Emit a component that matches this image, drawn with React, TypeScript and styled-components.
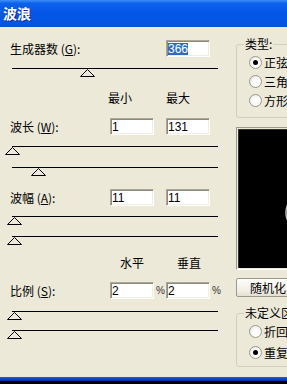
import React from 'react';
import styled, { createGlobalStyle } from 'styled-components';

const GlobalStyle = createGlobalStyle`
    html, body {
        margin: 0;
        padding: 0;
        background: #000;
        overflow: hidden;
    }
    body {
        font-family: "Noto Sans CJK SC", "Noto Sans", sans-serif;
        color: #000;
    }
`;

const Window = styled.div`
    width: 287px;
    display: flex;
    flex-direction: column;
    overflow: hidden;
`;

const TitleBar = styled.div`
    height: 27px;
    display: flex;
    align-items: center;
    padding-left: 3px;
    padding-bottom: 1px;
    box-sizing: border-box;
    color: #fff;
    font-size: 14px;
    font-weight: bold;
    text-shadow: 1px 1px #0b2a9a;
    background: linear-gradient(
        to bottom,
        #3d8ff8 0%,
        #0d62ec 12%,
        #0457e6 45%,
        #0356e4 80%,
        #0a4fd6 100%
    );
`;

const Body = styled.div`
    height: 350px;
    display: flex;
    background: #ece9d8;
    overflow: hidden;
`;

const BottomEdge = styled.div`
    height: 4px;
    background: linear-gradient(to bottom, #1b5ee6, #0a3fcc 60%, #05289a);
`;

const LeftColumn = styled.div`
    width: 236px;
    flex-shrink: 0;
    box-sizing: border-box;
    padding: 13px 0 0 10px;
`;

const RightColumn = styled.div`
    width: 120px;
    flex-shrink: 0;
    padding-top: 10px;
    display: flex;
    flex-direction: column;
`;

const grid = `
    display: grid;
    grid-template-columns: 100px 44px 12px 44px 14px;
`;

const FormRow = styled.div<{ $top: number }>`
    ${grid}
    height: 17px;
    align-items: center;
    margin-top: ${(p) => p.$top}px;
`;

const HeaderRow = styled.div<{ $top: number }>`
    ${grid}
    height: 14px;
    line-height: 14px;
    font-size: 12px;
    margin-top: ${(p) => p.$top}px;
`;

const HeaderCell = styled.div<{ $col: number; $center?: boolean; $shift?: number }>`
    grid-column: ${(p) => p.$col};
    text-align: ${(p) => (p.$center ? 'center' : 'left')};
    margin-left: ${(p) => p.$shift || 0}px;
    white-space: nowrap;
`;

const Label = styled.div<{ $span?: number }>`
    grid-column: 1 / span ${(p) => p.$span || 1};
    font-size: 12px;
    line-height: 14px;
    white-space: nowrap;
`;

const Field = styled.div<{ $col: number }>`
    grid-column: ${(p) => p.$col};
    height: 17px;
    box-sizing: border-box;
    display: flex;
    align-items: center;
    padding-left: 1px;
    background: #fff;
    border: 1px solid;
    border-color: #aca899 #fff #fff #aca899;
    box-shadow: inset 1px 1px #8d8a7c, inset -1px -1px #f1efe2;
    font-family: "Liberation Sans", Arial, sans-serif;
    font-size: 12px;
`;

const Selected = styled.span`
    display: inline-block;
    height: 12px;
    line-height: 12px;
    background: #316ac5;
    color: #fff;
`;

const Percent = styled.div<{ $col: number }>`
    grid-column: ${(p) => p.$col};
    font-family: "Liberation Sans", Arial, sans-serif;
    font-size: 10px;
    padding-left: 2px;
    color: #333;
`;

const Track = styled.div<{ $top: number }>`
    position: relative;
    margin: ${(p) => p.$top}px 0 0 2px;
    width: 206px;
    height: 9px;
    border-top: 1px solid #000;
`;

const Thumb = styled.svg`
    position: absolute;
    top: 0;
    width: 15px;
    height: 8px;
`;

const GroupBox = styled.fieldset<{ $top: number; $bottom: number; $pt: number }>`
    margin: ${(p) => p.$top}px 0 0 0;
    padding: ${(p) => p.$pt}px 0 ${(p) => p.$bottom}px 8px;
    border: 1px solid #d0d0bf;
    border-radius: 3px;
    min-width: 0;
`;

const Legend = styled.legend`
    font-size: 12px;
    line-height: 14px;
    padding: 0 1px;
    margin-left: -1px;
    white-space: nowrap;
`;

const RadioRow = styled.div<{ $h: number }>`
    height: ${(p) => p.$h}px;
    display: flex;
    align-items: center;
    gap: 2px;
    padding-left: 4px;
    font-size: 12px;
    white-space: nowrap;
`;

const RadioDot = styled.span<{ $on?: boolean }>`
    width: 13px;
    height: 13px;
    box-sizing: border-box;
    border-radius: 50%;
    border: 1px solid #9a988c;
    background: radial-gradient(circle at 60% 60%, #ffffff 35%, #e4e2d8 100%);
    display: flex;
    align-items: center;
    justify-content: center;
    flex-shrink: 0;
    &::after {
        content: '';
        width: 5px;
        height: 5px;
        border-radius: 50%;
        background: #000;
        display: ${(p) => (p.$on ? 'block' : 'none')};
    }
`;

const Preview = styled.div`
    margin-top: 9px;
    height: 143px;
    box-sizing: border-box;
    border: 1px solid;
    border-color: #9d9a8b #fff #fff #9d9a8b;
    padding: 1px;
    display: flex;
`;

const Canvas = styled.div`
    flex: 1;
    background: #000;
    border-top: 1px solid #333;
    border-left: 1px solid #333;
`;

const Button = styled.div`
    margin-top: 8px;
    width: 64px;
    height: 19px;
    box-sizing: border-box;
    border: 1px solid #9c998b;
    border-radius: 2px;
    background: linear-gradient(to bottom, #fdfdfb, #f0eee5 70%, #e2dfd2);
    font-size: 12px;
    line-height: 17px;
    text-align: center;
    white-space: nowrap;
`;

const Slider = ({ top, pct }: { top: number; pct: number }) => (
    <Track $top={top}>
        <Thumb viewBox="0 0 15 8" style={{ left: `calc(${pct}% - 7.5px)` }}>
            <polygon points="7.5,0.5 0.5,7.5 14.5,7.5" fill="#ece9d8" stroke="#000" strokeWidth="1" />
        </Thumb>
    </Track>
);

const pct = (v: number, min: number, max: number) => ((v - min) / (max - min)) * 100;

export default function App() {
    return (
        <>
            <GlobalStyle />
            <Window>
                <TitleBar>波浪</TitleBar>
                <Body>
                    <LeftColumn>
                        <FormRow $top={0}>
                            <Label $span={3}>
                                生成器数 (<u>G</u>):
                            </Label>
                            <Field $col={4}>
                                <Selected>366</Selected>
                            </Field>
                        </FormRow>
                        <Slider top={11} pct={pct(366, 1, 999)} />

                        <HeaderRow $top={13}>
                            <HeaderCell $col={2} $shift={-2}>最小</HeaderCell>
                            <HeaderCell $col={4}>最大</HeaderCell>
                        </HeaderRow>
                        <FormRow $top={13}>
                            <Label>
                                波长 (<u>W</u>):
                            </Label>
                            <Field $col={2}>1</Field>
                            <Field $col={4}>131</Field>
                        </FormRow>
                        <Slider top={11} pct={pct(1, 1, 999)} />
                        <Slider top={11} pct={pct(131, 1, 999)} />

                        <FormRow $top={12}>
                            <Label>
                                波幅 (<u>A</u>):
                            </Label>
                            <Field $col={2}>11</Field>
                            <Field $col={4}>11</Field>
                        </FormRow>
                        <Slider top={10} pct={pct(11, 1, 999)} />
                        <Slider top={10} pct={pct(11, 1, 999)} />

                        <HeaderRow $top={10}>
                            <HeaderCell $col={2} $center>水平</HeaderCell>
                            <HeaderCell $col={4} $center $shift={2}>垂直</HeaderCell>
                        </HeaderRow>
                        <FormRow $top={12}>
                            <Label>
                                比例 (<u>S</u>):
                            </Label>
                            <Field $col={2}>2</Field>
                            <Percent $col={3}>%</Percent>
                            <Field $col={4}>2</Field>
                            <Percent $col={5}>%</Percent>
                        </FormRow>
                        <Slider top={12} pct={pct(2, 1, 100)} />
                        <Slider top={9} pct={pct(2, 1, 100)} />
                    </LeftColumn>

                    <RightColumn>
                        <GroupBox $top={0} $pt={2} $bottom={7}>
                            <Legend>类型:</Legend>
                            <RadioRow $h={19}>
                                <RadioDot $on />
                                正弦
                            </RadioRow>
                            <RadioRow $h={19}>
                                <RadioDot />
                                三角形
                            </RadioRow>
                            <RadioRow $h={19}>
                                <RadioDot />
                                方形
                            </RadioRow>
                        </GroupBox>

                        <Preview>
                            <Canvas>
                                <svg width="110" height="139" viewBox="0 0 110 139">
                                    <path
                                        d="M 54 66 Q 40 82.5 54 99"
                                        fill="none"
                                        stroke="#b8b8b8"
                                        strokeWidth="1.6"
                                    />
                                </svg>
                            </Canvas>
                        </Preview>

                        <Button>随机化</Button>

                        <GroupBox $top={9} $pt={1} $bottom={3}>
                            <Legend>未定义区域:</Legend>
                            <RadioRow $h={21}>
                                <RadioDot />
                                折回
                            </RadioRow>
                            <RadioRow $h={21}>
                                <RadioDot $on />
                                重复像素
                            </RadioRow>
                        </GroupBox>
                    </RightColumn>
                </Body>
                <BottomEdge />
            </Window>
        </>
    );
}
